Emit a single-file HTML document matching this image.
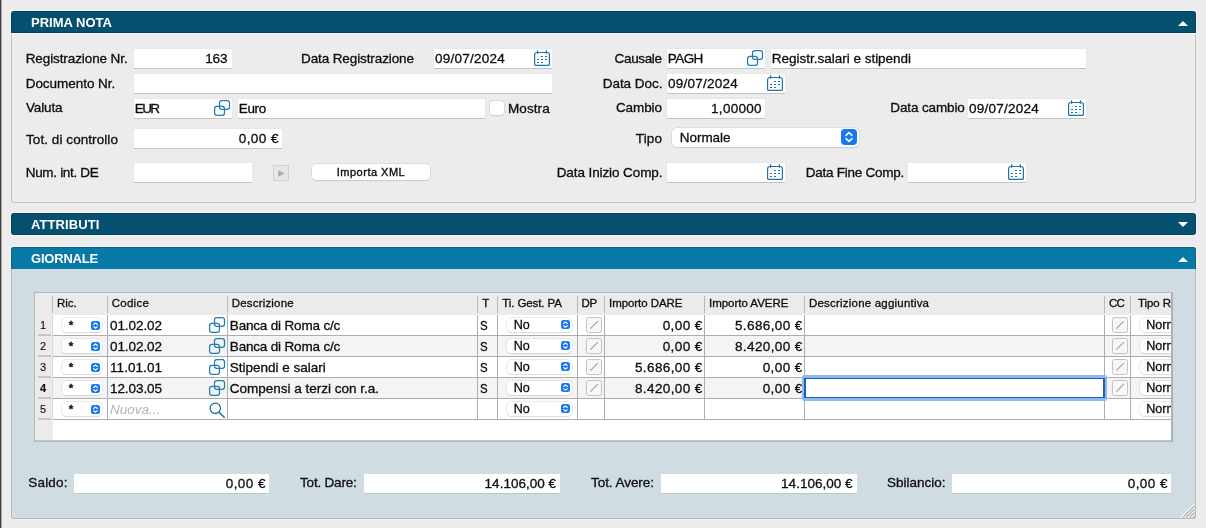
<!DOCTYPE html>
<html>
<head>
<meta charset="utf-8">
<title>Prima Nota</title>
<style>
html,body{margin:0;padding:0;}
body{width:1206px;height:528px;overflow:hidden;background:#ececec;font-family:"Liberation Sans",sans-serif;font-size:13.5px;color:#0d0d0d;}
#root{position:relative;width:1206px;height:528px;overflow:hidden;background:#ececec;will-change:transform;}
#root *{box-sizing:border-box;}
.abs,.t,.f,.f2,.hd,.pop,.sq,.bb{position:absolute;}
.t{white-space:nowrap;line-height:16px;height:16px;-webkit-text-stroke:0.3px #0d0d0d;}
.r{text-align:right;}
.hd{left:11px;width:1185px;height:22px;color:#fff;font-weight:bold;box-shadow:0 0 0 1.5px #f6f1ee,inset 0 0 0 1px rgba(0,30,50,0.22);}
.hd .t{left:20px;top:3.5px;font-size:13px;-webkit-text-stroke:0;}
.f{background:#fff;box-shadow:0 1px 0 #c4c4c4,0 0 0 0.5px #e3e3e3;}
.f2{background:#fff;box-shadow:0 1px 0 #bcc6cb;}
.pop{background:#fff;border-radius:5px;box-shadow:0 0 0 0.5px #d2d2d2,0 0.5px 1px rgba(0,0,0,0.16);}
.gp{box-shadow:0 0 0 0.5px #d9d9d9,0 0.5px 0.8px rgba(0,0,0,0.13);}
.bb{background:#1877f2;}
.sq{width:16px;height:16px;border:1px solid #c3c3c3;border-radius:2.5px;background:#f7f7f7;}
.h11{font-size:11px;line-height:14px;height:14px;}
svg{position:absolute;overflow:visible;}
</style>
</head>
<body>
<div id="root">
<div class="abs" style="left:0;top:0;width:1px;height:528px;background:#3e3e3e"></div><div class="abs" style="left:1px;top:0;width:1px;height:528px;background:#a9a9a9"></div>
<div class="abs" style="left:11px;top:30px;width:1185px;height:173px;border:1px solid #bcbcbc;border-top:none;background:#ececec;border-radius:0 0 3px 3px;box-shadow:0 0 0 1px #f2f2f2,inset 0 0 0 1px #f2f2f2"></div>
<div class="hd" style="top:11px;background:#05506f;border-radius:3px 3px 0 0"><span class="t">PRIMA NOTA</span><svg style="left:1167px;top:10px" width="10" height="5"><path d="M0 5L5 0L10 5Z" fill="#fff"/></svg></div>
<span class="t" style="left:25.7px;top:50.5px;letter-spacing:-0.097px;">Registrazione Nr.</span>
<span class="t" style="left:25.7px;top:75.5px;letter-spacing:-0.037px;">Documento Nr.</span>
<span class="t" style="left:26px;top:100px;letter-spacing:-0.136px;">Valuta</span>
<span class="t" style="left:26px;top:131.5px;letter-spacing:0.069px;">Tot. di controllo</span>
<span class="t" style="left:25.7px;top:165px;letter-spacing:-0.311px;">Num. int. DE</span>
<span class="t" style="left:301px;top:50.5px;letter-spacing:-0.107px;">Data Registrazione</span>
<span class="t r" style="left:362px;width:299.645px;top:50.5px;letter-spacing:-0.355px;">Causale</span>
<span class="t r" style="left:362.5px;width:299.972px;top:75.5px;letter-spacing:-0.028px;">Data Doc.</span>
<span class="t r" style="left:362px;width:299.916px;top:100px;letter-spacing:-0.084px;">Cambio</span>
<span class="t r" style="left:362px;width:300.146px;top:131px;letter-spacing:0.146px;">Tipo</span>
<span class="t r" style="left:362.5px;width:299.906px;top:165px;letter-spacing:-0.094px;">Data Inizio Comp.</span>
<span class="t" style="left:805.7px;top:165px;letter-spacing:-0.246px;">Data Fine Comp.</span>
<span class="t" style="left:890.3px;top:100px;letter-spacing:-0.129px;">Data cambio</span>
<span class="t" style="left:508px;top:101px;letter-spacing:0.088px;">Mostra</span>
<div class="f" style="left:134px;top:49px;width:98px;height:19px"><span class="t r" style="left:-206.5px;width:299.888px;top:2px;letter-spacing:-0.112px;">163</span>
</div>
<div class="f" style="left:434px;top:49px;width:118px;height:19px"><span class="t" style="left:1px;top:2px;letter-spacing:0.248px;">09/07/2024</span>
<svg style="left:100px;top:1px" width="16" height="16" viewBox="0 0 16 16"><path d="M2.8 2.5H13.2A2.2 2.2 0 0 1 15.4 4.7V14.2A1.2 1.2 0 0 1 14.2 15.4H1.8A1.2 1.2 0 0 1 0.6 14.2V4.7A2.2 2.2 0 0 1 2.8 2.5Z" fill="none" stroke="#1f72a3" stroke-width="1.2"/><path d="M3.6 0.2V3.8M12.4 0.2V3.8" stroke="#1f72a3" stroke-width="1.2" fill="none"/><path d="M7 6.5h2M11 6.5h2M3 9.5h2M7 9.5h2M11 9.5h2M3 12.45h2M7 12.45h2" stroke="#1f72a3" stroke-width="1.15" fill="none"/></svg></div>
<div class="f" style="left:667px;top:49px;width:98px;height:19px"><span class="t" style="left:0.8px;top:2px;letter-spacing:-0.586px;">PAGH</span>
<svg style="left:80px;top:1px" width="16" height="16" viewBox="0 0 16 16"><rect x="5.5" y="0.55" width="10" height="8.8" rx="2.3" fill="none" stroke="#1f7db2" stroke-width="1.25"/><rect x="0.6" y="6.4" width="9.9" height="9" rx="2.3" fill="none" stroke="#1f7db2" stroke-width="1.25"/></svg></div>
<div class="f" style="left:771px;top:49px;width:315px;height:19px"><span class="t" style="left:0.8px;top:2px;letter-spacing:-0.011px;">Registr.salari e stipendi</span>
</div>
<div class="f" style="left:134px;top:74px;width:418px;height:19px"></div>
<div class="f" style="left:667px;top:74px;width:118px;height:19px"><span class="t" style="left:1px;top:2px;letter-spacing:0.248px;">09/07/2024</span>
<svg style="left:100px;top:1px" width="16" height="16" viewBox="0 0 16 16"><path d="M2.8 2.5H13.2A2.2 2.2 0 0 1 15.4 4.7V14.2A1.2 1.2 0 0 1 14.2 15.4H1.8A1.2 1.2 0 0 1 0.6 14.2V4.7A2.2 2.2 0 0 1 2.8 2.5Z" fill="none" stroke="#1f72a3" stroke-width="1.2"/><path d="M3.6 0.2V3.8M12.4 0.2V3.8" stroke="#1f72a3" stroke-width="1.2" fill="none"/><path d="M7 6.5h2M11 6.5h2M3 9.5h2M7 9.5h2M11 9.5h2M3 12.45h2M7 12.45h2" stroke="#1f72a3" stroke-width="1.15" fill="none"/></svg></div>
<div class="f" style="left:134px;top:99px;width:98px;height:19px"><span class="t" style="left:0.8px;top:2px;letter-spacing:-1.652px;">EUR</span>
<svg style="left:80px;top:1px" width="16" height="16" viewBox="0 0 16 16"><rect x="5.5" y="0.55" width="10" height="8.8" rx="2.3" fill="none" stroke="#1f7db2" stroke-width="1.25"/><rect x="0.6" y="6.4" width="9.9" height="9" rx="2.3" fill="none" stroke="#1f7db2" stroke-width="1.25"/></svg></div>
<div class="f" style="left:238px;top:99px;width:247px;height:19px"><span class="t" style="left:0.8px;top:2px;letter-spacing:-0.373px;">Euro</span>
</div>
<div class="abs" style="left:490px;top:101px;width:14px;height:14px;border-radius:3.5px;background:#fff;box-shadow:0 0 0 0.5px #c8c8c8,0 1px 1px rgba(0,0,0,0.12)"></div>
<div class="f" style="left:667px;top:99px;width:98px;height:19px"><span class="t r" style="left:-205.5px;width:300.267px;top:2px;letter-spacing:0.267px;">1,00000</span>
</div>
<div class="f" style="left:968px;top:99px;width:118px;height:19px"><span class="t" style="left:1px;top:2px;letter-spacing:0.248px;">09/07/2024</span>
<svg style="left:100px;top:1px" width="16" height="16" viewBox="0 0 16 16"><path d="M2.8 2.5H13.2A2.2 2.2 0 0 1 15.4 4.7V14.2A1.2 1.2 0 0 1 14.2 15.4H1.8A1.2 1.2 0 0 1 0.6 14.2V4.7A2.2 2.2 0 0 1 2.8 2.5Z" fill="none" stroke="#1f72a3" stroke-width="1.2"/><path d="M3.6 0.2V3.8M12.4 0.2V3.8" stroke="#1f72a3" stroke-width="1.2" fill="none"/><path d="M7 6.5h2M11 6.5h2M3 9.5h2M7 9.5h2M11 9.5h2M3 12.45h2M7 12.45h2" stroke="#1f72a3" stroke-width="1.15" fill="none"/></svg></div>
<div class="f" style="left:134px;top:129px;width:148px;height:19px"><span class="t r" style="left:-155.5px;width:300.453px;top:2px;letter-spacing:0.453px;">0,00 €</span>
</div>
<div class="pop" style="left:672px;top:127.5px;width:187.3px;height:19.8px"><span class="t" style="left:7.8px;top:2px;letter-spacing:-0.053px;">Normale</span>
<div class="bb" style="left:169px;top:1.9px;width:16px;height:16px;border-radius:4px"><svg style="left:0;top:0" width="16" height="16" viewBox="0 0 16 16"><path d="M5 6.4L8 3.6L11 6.4M5 9.6L8 12.4L11 9.6" fill="none" stroke="#fff" stroke-width="1.5" stroke-linecap="round" stroke-linejoin="round"/></svg></div></div>
<div class="f" style="left:134px;top:163px;width:118px;height:19px"></div>
<div class="abs" style="left:273px;top:165px;width:16px;height:16px;background:#e6e6e6;border:1px solid #cfcfcf"><svg style="left:4px;top:4px" width="7" height="7" viewBox="0 0 7 7"><path d="M0.3 0.3L6.5 3.5L0.3 6.7Z" fill="#a9a9a9"/></svg></div>
<div class="pop" style="left:312px;top:164px;width:118px;height:16px;border-radius:4.5px"><span class="t h11" style="left:0;width:118px;text-align:center;top:0.5px;letter-spacing:0.5px;-webkit-text-stroke:0.35px #0d0d0d">Importa XML</span></div>
<div class="f" style="left:667px;top:163px;width:118px;height:19px"><svg style="left:100px;top:1px" width="16" height="16" viewBox="0 0 16 16"><path d="M2.8 2.5H13.2A2.2 2.2 0 0 1 15.4 4.7V14.2A1.2 1.2 0 0 1 14.2 15.4H1.8A1.2 1.2 0 0 1 0.6 14.2V4.7A2.2 2.2 0 0 1 2.8 2.5Z" fill="none" stroke="#1f72a3" stroke-width="1.2"/><path d="M3.6 0.2V3.8M12.4 0.2V3.8" stroke="#1f72a3" stroke-width="1.2" fill="none"/><path d="M7 6.5h2M11 6.5h2M3 9.5h2M7 9.5h2M11 9.5h2M3 12.45h2M7 12.45h2" stroke="#1f72a3" stroke-width="1.15" fill="none"/></svg></div>
<div class="f" style="left:908px;top:163px;width:118px;height:19px"><svg style="left:100px;top:1px" width="16" height="16" viewBox="0 0 16 16"><path d="M2.8 2.5H13.2A2.2 2.2 0 0 1 15.4 4.7V14.2A1.2 1.2 0 0 1 14.2 15.4H1.8A1.2 1.2 0 0 1 0.6 14.2V4.7A2.2 2.2 0 0 1 2.8 2.5Z" fill="none" stroke="#1f72a3" stroke-width="1.2"/><path d="M3.6 0.2V3.8M12.4 0.2V3.8" stroke="#1f72a3" stroke-width="1.2" fill="none"/><path d="M7 6.5h2M11 6.5h2M3 9.5h2M7 9.5h2M11 9.5h2M3 12.45h2M7 12.45h2" stroke="#1f72a3" stroke-width="1.15" fill="none"/></svg></div>
<div class="hd" style="top:213px;background:#05506f;border-radius:3px"><span class="t" style="letter-spacing:0.1px">ATTRIBUTI</span><svg style="left:1167px;top:9px" width="10" height="5"><path d="M0 0L10 0L5 5Z" fill="#fff"/></svg></div>
<div class="abs" style="left:11px;top:265px;width:1185px;height:254px;border:1px solid #b1b6b9;border-top:none;background:#cfdde3;border-radius:0 0 3px 3px;box-shadow:0 0 0 1px #f1f1f1,inset 0 0 0 1px #d4e1e7"></div>
<div class="hd" style="top:247px;background:#0779a6;border-radius:3px 3px 0 0;box-shadow:0 -1.5px 0 #f6f1ee,1.5px 0 0 #f6f1ee,-1.5px 0 0 #f6f1ee,1.5px -1.5px 0 #f6f1ee,-1.5px -1.5px 0 #f6f1ee,inset 0 1px 0 rgba(0,30,50,0.22),inset 1px 0 0 rgba(0,30,50,0.22),inset -1px 0 0 rgba(0,30,50,0.22)"><span class="t" style="letter-spacing:-0.2px">GIORNALE</span><svg style="left:1167px;top:10px" width="10" height="5"><path d="M0 5L5 0L10 5Z" fill="#fff"/></svg></div>
<div class="abs" id="grid" style="left:34px;top:292px;width:1139px;height:150px;border:1px solid #b2babf;border-right:2px solid #abb2b6;background:#fff;overflow:hidden">
<div class="abs" style="left:0;top:0;width:1137px;height:22px;background:#ebebeb"></div>
<div class="abs" style="left:0;top:0;width:17.6px;height:148px;background:#ebebeb"></div>
<div class="abs" style="left:0;top:147px;width:1137px;height:1px;background:#c4c8ca"></div>
<div class="abs" style="left:17px;top:22px;width:1120px;height:20px;background:#fff"></div>
<div class="abs" style="left:17px;top:42px;width:1120px;height:1px;background:#adadad"></div>
<div class="abs" style="left:2.5px;top:41px;width:13px;height:2px;background:#c6c6c6"></div>
<div class="abs" style="left:17px;top:43px;width:1120px;height:20px;background:#f4f4f4"></div>
<div class="abs" style="left:17px;top:63px;width:1120px;height:1px;background:#adadad"></div>
<div class="abs" style="left:2.5px;top:62px;width:13px;height:2px;background:#c6c6c6"></div>
<div class="abs" style="left:17px;top:64px;width:1120px;height:20px;background:#fff"></div>
<div class="abs" style="left:17px;top:84px;width:1120px;height:1px;background:#adadad"></div>
<div class="abs" style="left:2.5px;top:83px;width:13px;height:2px;background:#c6c6c6"></div>
<div class="abs" style="left:17px;top:85px;width:1120px;height:20px;background:#f4f4f4"></div>
<div class="abs" style="left:17px;top:105px;width:1120px;height:1px;background:#adadad"></div>
<div class="abs" style="left:2.5px;top:104px;width:13px;height:2px;background:#c6c6c6"></div>
<div class="abs" style="left:17px;top:106px;width:1120px;height:20px;background:#fff"></div>
<div class="abs" style="left:17px;top:126px;width:1120px;height:1px;background:#adadad"></div>
<div class="abs" style="left:2.5px;top:125px;width:13px;height:2px;background:#c6c6c6"></div>
<div class="abs" style="left:17px;top:3px;width:1px;height:17px;background:#b9b9b9"></div>
<div class="abs" style="left:72px;top:3px;width:1px;height:17px;background:#b9b9b9"></div>
<div class="abs" style="left:192px;top:3px;width:1px;height:17px;background:#b9b9b9"></div>
<div class="abs" style="left:442px;top:3px;width:1px;height:17px;background:#b9b9b9"></div>
<div class="abs" style="left:462px;top:3px;width:1px;height:17px;background:#b9b9b9"></div>
<div class="abs" style="left:542px;top:3px;width:1px;height:17px;background:#b9b9b9"></div>
<div class="abs" style="left:569px;top:3px;width:1px;height:17px;background:#b9b9b9"></div>
<div class="abs" style="left:669px;top:3px;width:1px;height:17px;background:#b9b9b9"></div>
<div class="abs" style="left:769px;top:3px;width:1px;height:17px;background:#b9b9b9"></div>
<div class="abs" style="left:1069px;top:3px;width:1px;height:17px;background:#b9b9b9"></div>
<div class="abs" style="left:1095px;top:3px;width:1px;height:17px;background:#b9b9b9"></div>
<div class="abs" style="left:72px;top:22px;width:1px;height:105px;background:#adadad"></div>
<div class="abs" style="left:192px;top:22px;width:1px;height:105px;background:#adadad"></div>
<div class="abs" style="left:442px;top:22px;width:1px;height:105px;background:#adadad"></div>
<div class="abs" style="left:462px;top:22px;width:1px;height:105px;background:#adadad"></div>
<div class="abs" style="left:542px;top:22px;width:1px;height:105px;background:#adadad"></div>
<div class="abs" style="left:569px;top:22px;width:1px;height:105px;background:#adadad"></div>
<div class="abs" style="left:669px;top:22px;width:1px;height:105px;background:#adadad"></div>
<div class="abs" style="left:769px;top:22px;width:1px;height:105px;background:#adadad"></div>
<div class="abs" style="left:1069px;top:22px;width:1px;height:105px;background:#adadad"></div>
<div class="abs" style="left:1095px;top:22px;width:1px;height:105px;background:#adadad"></div>
<div class="abs" style="left:17px;top:22px;width:1px;height:105px;background:#d9d9d9"></div>
<span class="t" style="left:22px;top:3px;letter-spacing:-0.068px;font-size:11.5px;line-height:14px;height:14px;">Ric.</span>
<span class="t" style="left:76.7px;top:3px;letter-spacing:0.26px;font-size:11.5px;line-height:14px;height:14px;">Codice</span>
<span class="t" style="left:196.7px;top:3px;letter-spacing:0.192px;font-size:11.5px;line-height:14px;height:14px;">Descrizione</span>
<span class="t" style="left:447.3px;top:3px;font-size:11.5px;line-height:14px;height:14px;">T</span>
<span class="t" style="left:467.3px;top:3px;letter-spacing:-0.101px;font-size:11.5px;line-height:14px;height:14px;">Ti. Gest. PA</span>
<span class="t" style="left:546.5px;top:3px;letter-spacing:-0.276px;font-size:11.5px;line-height:14px;height:14px;">DP</span>
<span class="t" style="left:574px;top:3px;letter-spacing:-0.067px;font-size:11.5px;line-height:14px;height:14px;">Importo DARE</span>
<span class="t" style="left:674px;top:3px;letter-spacing:-0.024px;font-size:11.5px;line-height:14px;height:14px;">Importo AVERE</span>
<span class="t" style="left:774px;top:3px;letter-spacing:0.205px;font-size:11.5px;line-height:14px;height:14px;">Descrizione aggiuntiva</span>
<span class="t" style="left:1074px;top:3px;letter-spacing:-0.81px;font-size:11.5px;line-height:14px;height:14px;">CC</span>
<span class="t" style="left:1103px;top:3px;letter-spacing:-0.099px;font-size:11.5px;line-height:14px;height:14px;width:33.2px;overflow:hidden;">Tipo Riga</span>
<span class="t h11" style="left:-0.5px;width:17px;text-align:center;top:24.5px;-webkit-text-stroke:0.1px #0d0d0d;">1</span>
<div class="pop gp" style="left:26.5px;top:25px;width:40.5px;height:13.5px;border-radius:4px"><span class="t" style="left:7.2px;top:0px;font-size:11.5px;font-weight:bold;line-height:14px;">*</span><div class="bb" style="left:29.5px;top:2.6px;width:9px;height:9px;border-radius:2.5px"><svg style="left:0;top:0" width="9" height="9" viewBox="0 0 9 9"><path d="M2.7 3.5L4.5 1.9L6.3 3.5M2.7 5.6L4.5 7.2L6.3 5.6" fill="none" stroke="#fff" stroke-width="1.15" stroke-linecap="round" stroke-linejoin="round"/></svg></div></div>
<span class="t" style="left:75px;top:24.5px;letter-spacing:-0.079px;">01.02.02</span>
<svg style="left:174px;top:24px" width="16" height="16" viewBox="0 0 16 16"><rect x="5.5" y="0.55" width="10" height="8.8" rx="2.3" fill="none" stroke="#1f7db2" stroke-width="1.25"/><rect x="0.6" y="6.4" width="9.9" height="9" rx="2.3" fill="none" stroke="#1f7db2" stroke-width="1.25"/></svg><span class="t" style="left:194.8px;top:24.5px;letter-spacing:-0.175px;">Banca di Roma c/c</span>
<span class="t" style="left:445px;top:24.5px;transform:scaleX(0.85);transform-origin:0 0;">S</span>
<span class="t r" style="left:367.29999999999995px;width:300.413px;top:24.5px;letter-spacing:0.413px;">0,00 €</span>
<span class="t r" style="left:467.29999999999995px;width:300.388px;top:24.5px;letter-spacing:0.388px;">5.686,00 €</span>
<div class="sq" style="left:551px;top:24px"><svg style="left:0;top:0" width="14" height="14"><path d="M3.3 10.7L10.8 3.2" stroke="#9d9d9d" stroke-width="1.1"/></svg></div>
<div class="sq" style="left:1077px;top:24px"><svg style="left:0;top:0" width="14" height="14"><path d="M3.3 10.7L10.8 3.2" stroke="#9d9d9d" stroke-width="1.1"/></svg></div>
<div class="pop gp" style="left:471.5px;top:24.5px;width:65.5px;height:14.5px;border-radius:4.5px"><span class="t" style="left:7.2px;top:-0.8px;font-size:12.6px;letter-spacing:-0.05px">No</span><div class="bb" style="left:54.5px;top:2.6px;width:9px;height:9.4px;border-radius:2.5px"><svg style="left:0;top:0" width="9" height="9" viewBox="0 0 9 9"><path d="M2.7 3.5L4.5 1.9L6.3 3.5M2.7 5.6L4.5 7.2L6.3 5.6" fill="none" stroke="#fff" stroke-width="1.15" stroke-linecap="round" stroke-linejoin="round"/></svg></div></div>
<div class="pop gp" style="left:1105px;top:24.5px;width:70px;height:14.5px;border-radius:4.5px"><span class="t" style="left:6.2px;top:-0.8px;font-size:12.6px">Normale</span></div>
<span class="t h11" style="left:-0.5px;width:17px;text-align:center;top:45.5px;-webkit-text-stroke:0.1px #0d0d0d;">2</span>
<div class="pop gp" style="left:26.5px;top:46px;width:40.5px;height:13.5px;border-radius:4px"><span class="t" style="left:7.2px;top:0px;font-size:11.5px;font-weight:bold;line-height:14px;">*</span><div class="bb" style="left:29.5px;top:2.6px;width:9px;height:9px;border-radius:2.5px"><svg style="left:0;top:0" width="9" height="9" viewBox="0 0 9 9"><path d="M2.7 3.5L4.5 1.9L6.3 3.5M2.7 5.6L4.5 7.2L6.3 5.6" fill="none" stroke="#fff" stroke-width="1.15" stroke-linecap="round" stroke-linejoin="round"/></svg></div></div>
<span class="t" style="left:75px;top:45.5px;letter-spacing:-0.079px;">01.02.02</span>
<svg style="left:174px;top:45px" width="16" height="16" viewBox="0 0 16 16"><rect x="5.5" y="0.55" width="10" height="8.8" rx="2.3" fill="none" stroke="#1f7db2" stroke-width="1.25"/><rect x="0.6" y="6.4" width="9.9" height="9" rx="2.3" fill="none" stroke="#1f7db2" stroke-width="1.25"/></svg><span class="t" style="left:194.8px;top:45.5px;letter-spacing:-0.175px;">Banca di Roma c/c</span>
<span class="t" style="left:445px;top:45.5px;transform:scaleX(0.85);transform-origin:0 0;">S</span>
<span class="t r" style="left:367.29999999999995px;width:300.413px;top:45.5px;letter-spacing:0.413px;">0,00 €</span>
<span class="t r" style="left:467.29999999999995px;width:300.388px;top:45.5px;letter-spacing:0.388px;">8.420,00 €</span>
<div class="sq" style="left:551px;top:45px"><svg style="left:0;top:0" width="14" height="14"><path d="M3.3 10.7L10.8 3.2" stroke="#9d9d9d" stroke-width="1.1"/></svg></div>
<div class="sq" style="left:1077px;top:45px"><svg style="left:0;top:0" width="14" height="14"><path d="M3.3 10.7L10.8 3.2" stroke="#9d9d9d" stroke-width="1.1"/></svg></div>
<div class="pop gp" style="left:471.5px;top:45.5px;width:65.5px;height:14.5px;border-radius:4.5px"><span class="t" style="left:7.2px;top:-0.8px;font-size:12.6px;letter-spacing:-0.05px">No</span><div class="bb" style="left:54.5px;top:2.6px;width:9px;height:9.4px;border-radius:2.5px"><svg style="left:0;top:0" width="9" height="9" viewBox="0 0 9 9"><path d="M2.7 3.5L4.5 1.9L6.3 3.5M2.7 5.6L4.5 7.2L6.3 5.6" fill="none" stroke="#fff" stroke-width="1.15" stroke-linecap="round" stroke-linejoin="round"/></svg></div></div>
<div class="pop gp" style="left:1105px;top:45.5px;width:70px;height:14.5px;border-radius:4.5px"><span class="t" style="left:6.2px;top:-0.8px;font-size:12.6px">Normale</span></div>
<span class="t h11" style="left:-0.5px;width:17px;text-align:center;top:66.5px;-webkit-text-stroke:0.1px #0d0d0d;">3</span>
<div class="pop gp" style="left:26.5px;top:67px;width:40.5px;height:13.5px;border-radius:4px"><span class="t" style="left:7.2px;top:0px;font-size:11.5px;font-weight:bold;line-height:14px;">*</span><div class="bb" style="left:29.5px;top:2.6px;width:9px;height:9px;border-radius:2.5px"><svg style="left:0;top:0" width="9" height="9" viewBox="0 0 9 9"><path d="M2.7 3.5L4.5 1.9L6.3 3.5M2.7 5.6L4.5 7.2L6.3 5.6" fill="none" stroke="#fff" stroke-width="1.15" stroke-linecap="round" stroke-linejoin="round"/></svg></div></div>
<span class="t" style="left:75px;top:66.5px;letter-spacing:0.064px;">11.01.01</span>
<svg style="left:174px;top:66px" width="16" height="16" viewBox="0 0 16 16"><rect x="5.5" y="0.55" width="10" height="8.8" rx="2.3" fill="none" stroke="#1f7db2" stroke-width="1.25"/><rect x="0.6" y="6.4" width="9.9" height="9" rx="2.3" fill="none" stroke="#1f7db2" stroke-width="1.25"/></svg><span class="t" style="left:194.8px;top:66.5px;">Stipendi e salari</span>
<span class="t" style="left:445px;top:66.5px;transform:scaleX(0.85);transform-origin:0 0;">S</span>
<span class="t r" style="left:367.29999999999995px;width:300.388px;top:66.5px;letter-spacing:0.388px;">5.686,00 €</span>
<span class="t r" style="left:467.29999999999995px;width:300.413px;top:66.5px;letter-spacing:0.413px;">0,00 €</span>
<div class="sq" style="left:551px;top:66px"><svg style="left:0;top:0" width="14" height="14"><path d="M3.3 10.7L10.8 3.2" stroke="#9d9d9d" stroke-width="1.1"/></svg></div>
<div class="sq" style="left:1077px;top:66px"><svg style="left:0;top:0" width="14" height="14"><path d="M3.3 10.7L10.8 3.2" stroke="#9d9d9d" stroke-width="1.1"/></svg></div>
<div class="pop gp" style="left:471.5px;top:66.5px;width:65.5px;height:14.5px;border-radius:4.5px"><span class="t" style="left:7.2px;top:-0.8px;font-size:12.6px;letter-spacing:-0.05px">No</span><div class="bb" style="left:54.5px;top:2.6px;width:9px;height:9.4px;border-radius:2.5px"><svg style="left:0;top:0" width="9" height="9" viewBox="0 0 9 9"><path d="M2.7 3.5L4.5 1.9L6.3 3.5M2.7 5.6L4.5 7.2L6.3 5.6" fill="none" stroke="#fff" stroke-width="1.15" stroke-linecap="round" stroke-linejoin="round"/></svg></div></div>
<div class="pop gp" style="left:1105px;top:66.5px;width:70px;height:14.5px;border-radius:4.5px"><span class="t" style="left:6.2px;top:-0.8px;font-size:12.6px">Normale</span></div>
<span class="t h11" style="left:-0.5px;width:17px;text-align:center;top:87.5px;-webkit-text-stroke:0.1px #0d0d0d;font-weight:bold;">4</span>
<div class="pop gp" style="left:26.5px;top:88px;width:40.5px;height:13.5px;border-radius:4px"><span class="t" style="left:7.2px;top:0px;font-size:11.5px;font-weight:bold;line-height:14px;">*</span><div class="bb" style="left:29.5px;top:2.6px;width:9px;height:9px;border-radius:2.5px"><svg style="left:0;top:0" width="9" height="9" viewBox="0 0 9 9"><path d="M2.7 3.5L4.5 1.9L6.3 3.5M2.7 5.6L4.5 7.2L6.3 5.6" fill="none" stroke="#fff" stroke-width="1.15" stroke-linecap="round" stroke-linejoin="round"/></svg></div></div>
<span class="t" style="left:75px;top:87.5px;letter-spacing:-0.079px;">12.03.05</span>
<svg style="left:174px;top:87px" width="16" height="16" viewBox="0 0 16 16"><rect x="5.5" y="0.55" width="10" height="8.8" rx="2.3" fill="none" stroke="#1f7db2" stroke-width="1.25"/><rect x="0.6" y="6.4" width="9.9" height="9" rx="2.3" fill="none" stroke="#1f7db2" stroke-width="1.25"/></svg><span class="t" style="left:194.8px;top:87.5px;">Compensi a terzi con r.a.</span>
<span class="t" style="left:445px;top:87.5px;transform:scaleX(0.85);transform-origin:0 0;">S</span>
<span class="t r" style="left:367.29999999999995px;width:300.388px;top:87.5px;letter-spacing:0.388px;">8.420,00 €</span>
<span class="t r" style="left:467.29999999999995px;width:300.413px;top:87.5px;letter-spacing:0.413px;">0,00 €</span>
<div class="sq" style="left:551px;top:87px"><svg style="left:0;top:0" width="14" height="14"><path d="M3.3 10.7L10.8 3.2" stroke="#9d9d9d" stroke-width="1.1"/></svg></div>
<div class="sq" style="left:1077px;top:87px"><svg style="left:0;top:0" width="14" height="14"><path d="M3.3 10.7L10.8 3.2" stroke="#9d9d9d" stroke-width="1.1"/></svg></div>
<div class="pop gp" style="left:471.5px;top:87.5px;width:65.5px;height:14.5px;border-radius:4.5px"><span class="t" style="left:7.2px;top:-0.8px;font-size:12.6px;letter-spacing:-0.05px">No</span><div class="bb" style="left:54.5px;top:2.6px;width:9px;height:9.4px;border-radius:2.5px"><svg style="left:0;top:0" width="9" height="9" viewBox="0 0 9 9"><path d="M2.7 3.5L4.5 1.9L6.3 3.5M2.7 5.6L4.5 7.2L6.3 5.6" fill="none" stroke="#fff" stroke-width="1.15" stroke-linecap="round" stroke-linejoin="round"/></svg></div></div>
<div class="pop gp" style="left:1105px;top:87.5px;width:70px;height:14.5px;border-radius:4.5px"><span class="t" style="left:6.2px;top:-0.8px;font-size:12.6px">Normale</span></div>
<span class="t h11" style="left:-0.5px;width:17px;text-align:center;top:108.5px;-webkit-text-stroke:0.1px #0d0d0d;">5</span>
<div class="pop gp" style="left:26.5px;top:109px;width:40.5px;height:13.5px;border-radius:4px"><span class="t" style="left:7.2px;top:0px;font-size:11.5px;font-weight:bold;line-height:14px;">*</span><div class="bb" style="left:29.5px;top:2.6px;width:9px;height:9px;border-radius:2.5px"><svg style="left:0;top:0" width="9" height="9" viewBox="0 0 9 9"><path d="M2.7 3.5L4.5 1.9L6.3 3.5M2.7 5.6L4.5 7.2L6.3 5.6" fill="none" stroke="#fff" stroke-width="1.15" stroke-linecap="round" stroke-linejoin="round"/></svg></div></div>
<span class="t" style="left:75px;top:108.5px;font-style:italic;color:#b3b3b3;-webkit-text-stroke:0;">Nuova...</span>
<svg style="left:174px;top:108.5px" width="16" height="16" viewBox="0 0 16 16"><circle cx="6.3" cy="6.3" r="5.2" fill="none" stroke="#1f72a3" stroke-width="1.3"/><path d="M10.2 10.2L15.2 15.2" stroke="#1f72a3" stroke-width="1.6" stroke-linecap="round"/></svg><div class="pop gp" style="left:471.5px;top:108.5px;width:65.5px;height:14.5px;border-radius:4.5px"><span class="t" style="left:7.2px;top:-0.8px;font-size:12.6px;letter-spacing:-0.05px">No</span><div class="bb" style="left:54.5px;top:2.6px;width:9px;height:9.4px;border-radius:2.5px"><svg style="left:0;top:0" width="9" height="9" viewBox="0 0 9 9"><path d="M2.7 3.5L4.5 1.9L6.3 3.5M2.7 5.6L4.5 7.2L6.3 5.6" fill="none" stroke="#fff" stroke-width="1.15" stroke-linecap="round" stroke-linejoin="round"/></svg></div></div>
<div class="pop gp" style="left:1105px;top:108.5px;width:70px;height:14.5px;border-radius:4.5px"><span class="t" style="left:6.2px;top:-0.8px;font-size:12.6px">Normale</span></div>
<div class="abs" style="left:767.2px;top:82px;width:304.4px;height:25.6px;background:#8db8f3;border-radius:2px;"></div>
<div class="abs" style="left:769.4px;top:84.6px;width:300.3px;height:20.9px;background:#1c61ad;"></div>
<div class="abs" style="left:771px;top:86.2px;width:297.1px;height:17.7px;background:#fff;"></div>
</div>
<span class="t" style="left:28.3px;top:475px;letter-spacing:0.164px;">Saldo:</span>
<div class="f2" style="left:73.5px;top:474px;width:195.5px;height:19px"><span class="t r" style="left:-108px;width:300.453px;top:2px;letter-spacing:0.453px;">0,00 €</span>
</div>
<span class="t" style="left:300px;top:475px;letter-spacing:-0.191px;">Tot. Dare:</span>
<div class="f2" style="left:363.5px;top:474px;width:196.5px;height:19px"><span class="t r" style="left:-107.5px;width:300.008px;top:2px;letter-spacing:0.008px;">14.106,00 €</span>
</div>
<span class="t" style="left:591px;top:475px;letter-spacing:-0.054px;">Tot. Avere:</span>
<div class="f2" style="left:660.5px;top:474px;width:196px;height:19px"><span class="t r" style="left:-108px;width:300.008px;top:2px;letter-spacing:0.008px;">14.106,00 €</span>
</div>
<span class="t" style="left:887px;top:475px;letter-spacing:-0.004px;">Sbilancio:</span>
<div class="f2" style="left:951.5px;top:474px;width:219.5px;height:19px"><span class="t r" style="left:-84px;width:300.453px;top:2px;letter-spacing:0.453px;">0,00 €</span>
</div>
<svg style="left:1181px;top:504px" width="13.2" height="13.2" viewBox="0 0 14 14"><path d="M0.4 14L14 0.4M3.9 14L14 3.9M7.4 14L14 7.4M10.9 14L14 10.9" stroke="#f6f8f9" stroke-width="1.35" fill="none"/><path d="M2.2 14L14 2.2M5.7 14L14 5.7M9.2 14L14 9.2M12.7 14L14 12.7" stroke="#a9abac" stroke-width="1.15" fill="none"/></svg>
</div>
</body>
</html>
